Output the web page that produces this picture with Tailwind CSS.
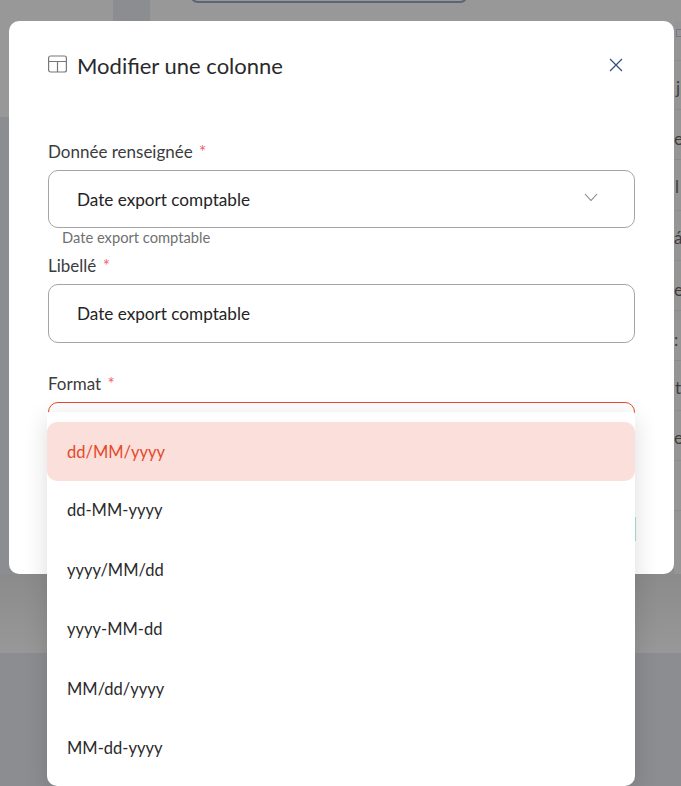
<!DOCTYPE html>
<html lang="fr">
<head>
<meta charset="utf-8">
<script src="https://cdn.jsdelivr.net/npm/@tailwindcss/browser@4"></script>
</head>
<body class="bg-[#8c8d91]">
<div class="relative w-[681px] h-[786px] overflow-hidden antialiased font-['Lato','Liberation_Sans',sans-serif]">
  <!-- dimmed page behind -->
  <div class="absolute inset-0 flex flex-col">
    <div class="relative h-[117px] bg-[#989898]">
      <div class="absolute left-[113px] top-0 w-[37px] h-[30px] bg-[#8c8d91]"></div>
      <div class="absolute left-[190px] top-[-19px] w-[278px] h-[22px] rounded-lg border-2 border-[#5d6475]"></div>
    </div>
    <div class="h-[457px] bg-[#8c8d91]"></div>
    <div class="h-[79px] bg-gradient-to-b from-[#8b8b8b] to-[#989898]"></div>
    <div class="flex-1 bg-[#8c8d91]"></div>
  </div>
  <div class="absolute left-[674px] top-[21px] w-[7px] h-[553px] bg-[#959595] text-[#3d3d3f] text-[17px] leading-none overflow-hidden">
    <div class="h-[40px] border-b border-[#8c8c90] pt-[8px] pl-[2px]"><div class="w-[7px] h-[8px] border border-[#77778a]"></div></div>
    <div class="h-[49px] border-b border-[#8c8c90] pt-[18px] pl-[2px]">j</div>
    <div class="h-[50px] border-b border-[#8c8c90] pt-[20px]">e</div>
    <div class="h-[51px] border-b border-[#8c8c90] pt-[18px] pl-[1px]">l</div>
    <div class="h-[50px] border-b border-[#8c8c90] pt-[18px]">á</div>
    <div class="h-[50px] border-b border-[#8c8c90] pt-[20px]">e</div>
    <div class="h-[50px] border-b border-[#8c8c90] pt-[20px]">:</div>
    <div class="h-[50px] border-b border-[#8c8c90] pt-[18px] pl-[1px]">t</div>
    <div class="h-[50px] border-b border-[#8c8c90] pt-[18px]">e</div>
    <div class="h-[50px] border-b border-[#8c8c90]"></div>
  </div>

  <!-- modal -->
  <div class="absolute left-[9px] top-[21px] w-[665px] h-[553px] rounded-[10px] bg-white px-[39px]">
    <div class="flex items-center justify-between h-[90px] pr-[12px]">
      <div class="flex items-center gap-[10px] -mt-[1px]">
        <svg class="w-[19px] h-[19px] -mt-[3px]" viewBox="0 0 19 19" fill="none" stroke="#77787c" stroke-width="1.2">
          <rect x="0.6" y="1" width="17.8" height="16" rx="2"/>
          <path d="M0.6 6.5H18.4M9.5 6.5V17"/>
        </svg>
        <h2 class="text-[22px] leading-[28px] font-normal text-[#2a2a2c]">Modifier une colonne</h2>
      </div>
      <svg class="w-[14px] h-[14px] -mt-[2px]" viewBox="0 0 14 14" fill="none" stroke="#34527f" stroke-width="1.3">
        <path d="M1 1L13 13M13 1L1 13"/>
      </svg>
    </div>

    <div class="pt-[31px]">
      <label class="block text-[17px] leading-[20px] text-[#3c3c3e]">Donnée renseignée <span class="text-[#f4606c] ml-[2px]">*</span></label>
      <div class="mt-[8px] flex items-center justify-between h-[58px] rounded-[10px] border border-[#a5a5a7] pl-[28px] pr-[36px]">
        <span class="text-[17.15px] text-[#242426] pt-[2px]">Date export comptable</span>
        <svg class="w-[14px] h-[9px] -mt-[4px]" viewBox="0 0 14 9" fill="none" stroke="#7f8083" stroke-width="1.1">
          <path d="M1 1L7 7.5L13 1"/>
        </svg>
      </div>
      <p class="pl-[14px] text-[14.7px] leading-[19px] text-[#707073]">Date export comptable</p>
    </div>

    <div class="pt-[6px]">
      <label class="block text-[17px] leading-[25px] text-[#3c3c3e]">Libellé <span class="text-[#f4606c] ml-[2px]">*</span></label>
      <div class="mt-[6px] flex items-center h-[59px] rounded-[10px] border border-[#a5a5a7] pl-[28px]">
        <span class="text-[17.15px] text-[#242426]">Date export comptable</span>
      </div>
    </div>

    <div class="pt-[28px]">
      <label class="block text-[17px] leading-[25px] text-[#3c3c3e]">Format <span class="text-[#f4606c] ml-[2px]">*</span></label>
      <div class="mt-[6px] h-[58px] rounded-[10px] border border-[#e5492a]"></div>
    </div>
    <div class="absolute left-[626px] top-[496px] w-[1px] h-[24px] bg-[#a8e3dc]"></div>
  </div>

  <!-- dropdown -->
  <div class="absolute left-[47px] top-[412px] w-[588px] h-[374px] rounded-b-[10px] rounded-t-[2px] bg-white pt-[10px] shadow-[0_6px_24px_rgba(0,0,0,0.14)] text-[16.5px] text-[#2a2a2c]">
    <div class="flex items-center h-[59px] rounded-[10px] bg-[#fadfdb] pl-[20px] pt-[2px] text-[#e5492a]">dd/MM/yyyy</div>
    <div class="flex items-center h-[58px] pl-[20px]">dd-MM-yyyy</div>
    <div class="flex items-center h-[60px] pl-[20px] pt-[2px]">yyyy/MM/dd</div>
    <div class="flex items-center h-[60px] pl-[20px]">yyyy-MM-dd</div>
    <div class="flex items-center h-[59px] pl-[20px] pt-[2px]">MM/dd/yyyy</div>
    <div class="flex items-center h-[59px] pl-[20px] pt-[2px]">MM-dd-yyyy</div>
  </div>
</div>
</body>
</html>
